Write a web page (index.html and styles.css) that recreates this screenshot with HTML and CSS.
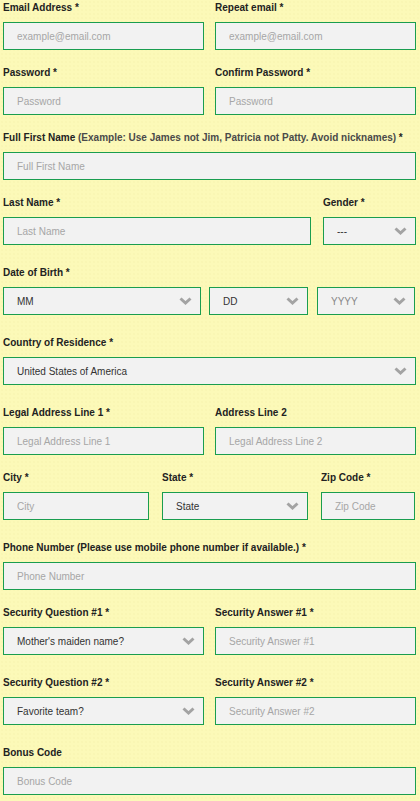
FILE: index.html
```html
<!DOCTYPE html>
<html lang="en">
<head>
<meta charset="utf-8">
<title>Registration</title>
<link rel="stylesheet" href="styles.css">
</head>
<body>
<form class="form">
  <div class="row cols-2">
    <div class="field"><label class="lbl">Email Address *</label><input class="ctl" type="text" placeholder="example@email.com"></div>
    <div class="field"><label class="lbl">Repeat email *</label><input class="ctl" type="text" placeholder="example@email.com"></div>
  </div>
  <div class="row cols-2">
    <div class="field"><label class="lbl">Password *</label><input class="ctl" type="text" placeholder="Password"></div>
    <div class="field"><label class="lbl">Confirm Password *</label><input class="ctl" type="text" placeholder="Password"></div>
  </div>
  <div class="row">
    <div class="field"><label class="lbl">Full First Name <span class="hint">(Example: Use James not Jim, Patricia not Patty. Avoid nicknames)</span> *</label><input class="ctl" type="text" placeholder="Full First Name"></div>
  </div>
  <div class="row cols-name sel">
    <div class="field"><label class="lbl">Last Name *</label><input class="ctl" type="text" placeholder="Last Name"></div>
    <div class="field"><label class="lbl">Gender *</label>
      <span class="selwrap"><select class="ctl sel-ctl"><option>---</option></select><svg class="chev" width="13" height="8" viewBox="0 0 13 8"><polyline points="1.5,1.5 6.5,6 11.5,1.5" fill="none" stroke="#a3a3a3" stroke-width="3"/></svg></span>
    </div>
  </div>
  <div class="row sel">
    <div class="field"><label class="lbl">Date of Birth *</label>
      <div class="cols-dob">
        <span class="selwrap"><select class="ctl sel-ctl"><option>MM</option></select><svg class="chev" width="13" height="8" viewBox="0 0 13 8"><polyline points="1.5,1.5 6.5,6 11.5,1.5" fill="none" stroke="#a3a3a3" stroke-width="3"/></svg></span>
        <span class="selwrap"><select class="ctl sel-ctl"><option>DD</option></select><svg class="chev" width="13" height="8" viewBox="0 0 13 8"><polyline points="1.5,1.5 6.5,6 11.5,1.5" fill="none" stroke="#a3a3a3" stroke-width="3"/></svg></span>
        <span class="selwrap"><select class="ctl sel-ctl muted"><option>YYYY</option></select><svg class="chev" width="13" height="8" viewBox="0 0 13 8"><polyline points="1.5,1.5 6.5,6 11.5,1.5" fill="none" stroke="#a3a3a3" stroke-width="3"/></svg></span>
      </div>
    </div>
  </div>
  <div class="row sel">
    <div class="field"><label class="lbl">Country of Residence *</label>
      <span class="selwrap"><select class="ctl sel-ctl"><option>United States of America</option></select><svg class="chev" width="13" height="8" viewBox="0 0 13 8"><polyline points="1.5,1.5 6.5,6 11.5,1.5" fill="none" stroke="#a3a3a3" stroke-width="3"/></svg></span>
    </div>
  </div>
  <div class="row cols-2">
    <div class="field"><label class="lbl">Legal Address Line 1 *</label><input class="ctl" type="text" placeholder="Legal Address Line 1"></div>
    <div class="field"><label class="lbl">Address Line 2</label><input class="ctl" type="text" placeholder="Legal Address Line 2"></div>
  </div>
  <div class="row cols-city sel">
    <div class="field"><label class="lbl">City *</label><input class="ctl" type="text" placeholder="City"></div>
    <div class="field"><label class="lbl">State *</label>
      <span class="selwrap"><select class="ctl sel-ctl"><option>State</option></select><svg class="chev" width="13" height="8" viewBox="0 0 13 8"><polyline points="1.5,1.5 6.5,6 11.5,1.5" fill="none" stroke="#a3a3a3" stroke-width="3"/></svg></span>
    </div>
    <div class="field"><label class="lbl">Zip Code *</label><input class="ctl" type="text" placeholder="Zip Code"></div>
  </div>
  <div class="row">
    <div class="field"><label class="lbl">Phone Number (Please use mobile phone number if available.) *</label><input class="ctl" type="text" placeholder="Phone Number"></div>
  </div>
  <div class="row cols-2 sel">
    <div class="field"><label class="lbl">Security Question #1 *</label>
      <span class="selwrap"><select class="ctl sel-ctl"><option>Mother's maiden name?</option></select><svg class="chev" width="13" height="8" viewBox="0 0 13 8"><polyline points="1.5,1.5 6.5,6 11.5,1.5" fill="none" stroke="#a3a3a3" stroke-width="3"/></svg></span>
    </div>
    <div class="field"><label class="lbl">Security Answer #1 *</label><input class="ctl" type="text" placeholder="Security Answer #1"></div>
  </div>
  <div class="row cols-2 sel">
    <div class="field"><label class="lbl">Security Question #2 *</label>
      <span class="selwrap"><select class="ctl sel-ctl"><option>Favorite team?</option></select><svg class="chev" width="13" height="8" viewBox="0 0 13 8"><polyline points="1.5,1.5 6.5,6 11.5,1.5" fill="none" stroke="#a3a3a3" stroke-width="3"/></svg></span>
    </div>
    <div class="field"><label class="lbl">Security Answer #2 *</label><input class="ctl" type="text" placeholder="Security Answer #2"></div>
  </div>
  <div class="row">
    <div class="field"><label class="lbl">Bonus Code</label><input class="ctl" type="text" placeholder="Bonus Code"></div>
  </div>
</form>
</body>
</html>
```

FILE: styles.css
```css
html, body {
  margin: 0;
  padding: 0;
}
body {
  background-color: #fcf9b8;
  background-image: radial-gradient(circle, #f4efaa 0.5px, transparent 0.8px);
  background-size: 4px 4px;
  font-family: "Liberation Sans", Arial, sans-serif;
  color: #222;
  width: 420px;
  height: 801px;
  overflow: hidden;
}
.form {
  padding: 1px 4px 0 3px;
}
.row {
  display: grid;
  grid-template-columns: 1fr;
  margin-bottom: 16px;
}
.row.sel {
  margin-bottom: 21px;
}
.cols-2 {
  grid-template-columns: 201px 201px;
  column-gap: 11px;
}
.cols-name {
  grid-template-columns: 308px 93px;
  column-gap: 12px;
}
.cols-city {
  grid-template-columns: 146px 146px 94px;
  column-gap: 13px;
}
.cols-dob {
  display: grid;
  grid-template-columns: 198px 99px 99px;
  column-gap: 8px;
}
.cols-dob .selwrap:last-child {
  margin-left: 1px;
}
.field {
  display: flex;
  flex-direction: column;
  min-width: 0;
}
.lbl {
  display: block;
  font-size: 10px;
  font-weight: bold;
  line-height: 14px;
  margin-bottom: 7px;
  color: #222;
  white-space: nowrap;
}
.hint {
  color: #4a4a4a;
}
.ctl {
  display: block;
  box-sizing: border-box;
  width: 100%;
  height: 28px;
  margin: 0;
  padding: 0 0 0 13px;
  border: 1px solid #1a9d4f;
  border-radius: 0;
  background: #f2f2f2;
  font-family: "Liberation Sans", Arial, sans-serif;
  font-size: 10px;
  color: #333;
  outline: none;
}
.ctl::placeholder {
  color: #a6a6a6;
  opacity: 1;
}
.selwrap {
  position: relative;
  display: block;
}
.sel-ctl {
  -webkit-appearance: none;
  appearance: none;
}
.sel-ctl.muted {
  color: #888;
}
.chev {
  position: absolute;
  right: 9px;
  top: 10px;
  pointer-events: none;
}
```
